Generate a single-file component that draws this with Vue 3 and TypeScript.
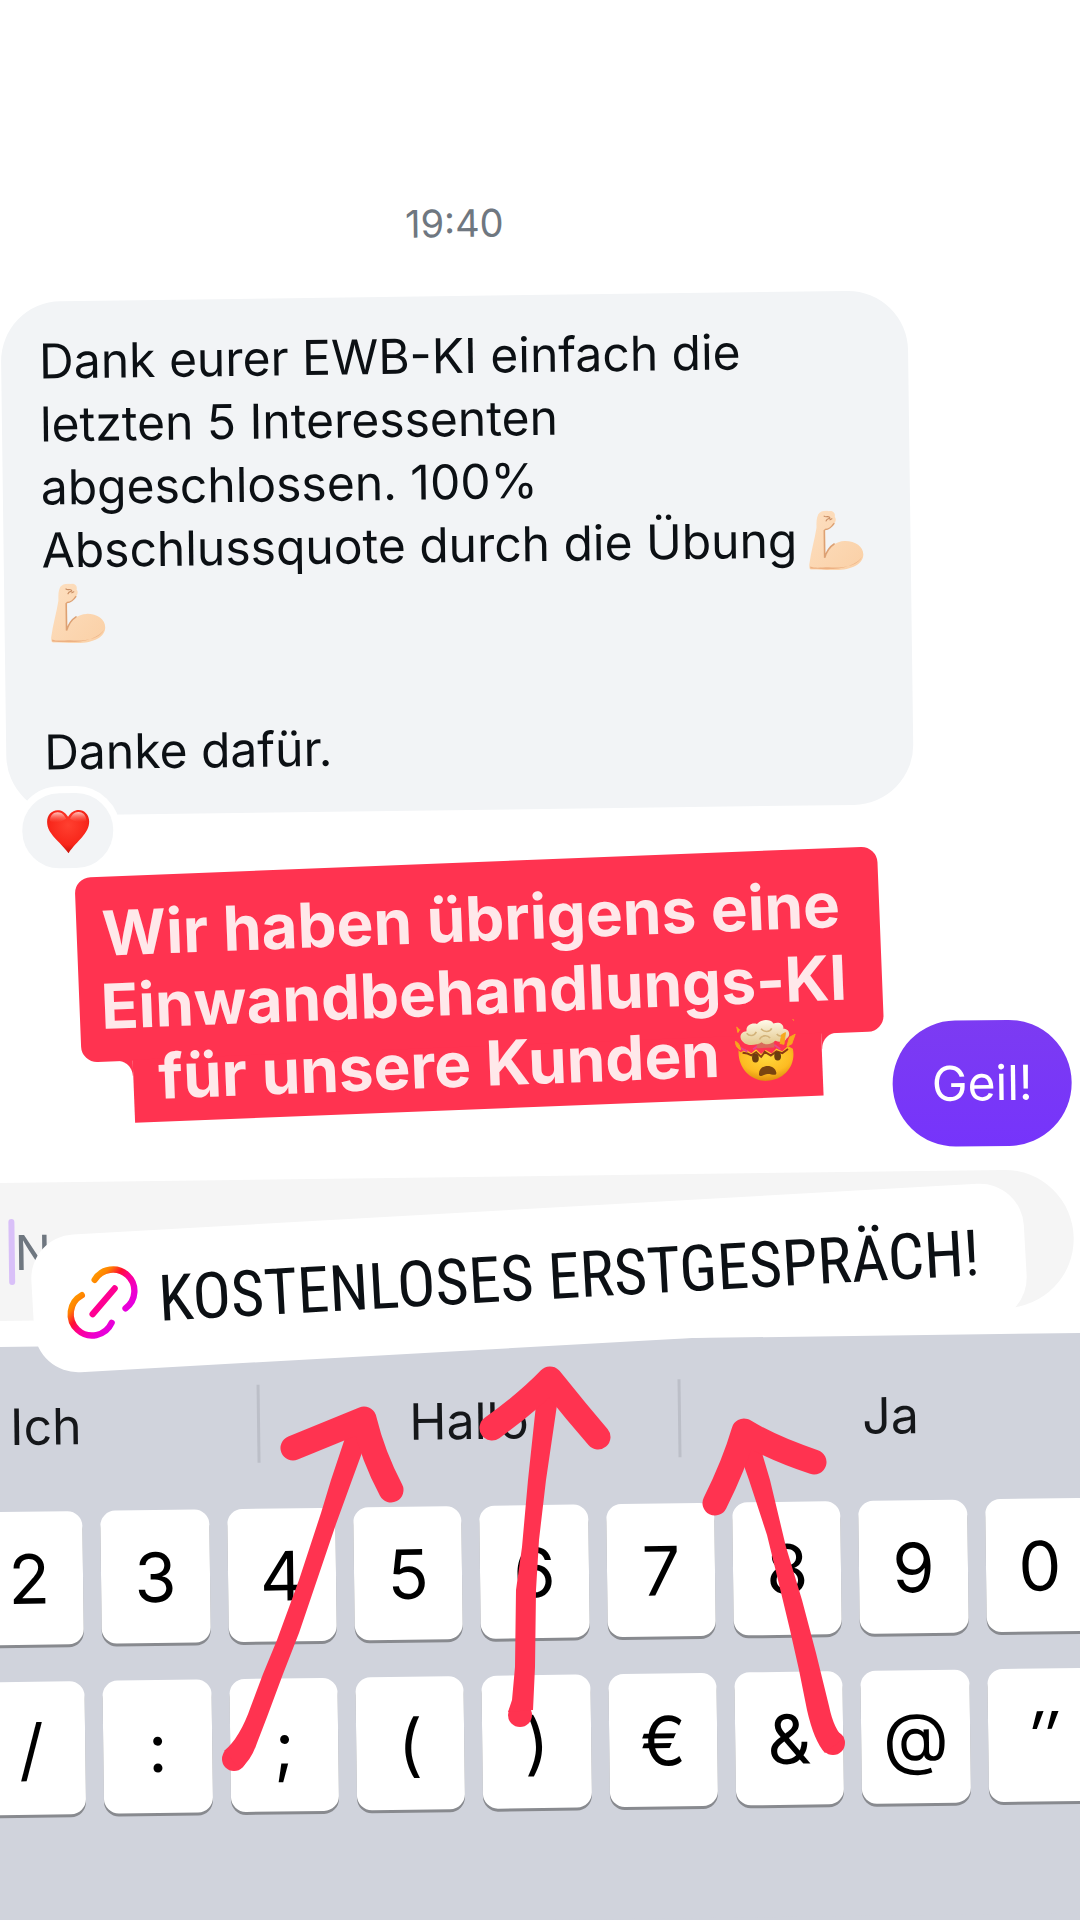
<script setup lang="ts">
const suggestions: string[] = ['Ich', 'Hallo', 'Ja']
const keyRows: string[][] = [
  ['2', '3', '4', '5', '6', '7', '8', '9', '0'],
  ['/', ':', ';', '(', ')', '€', '&', '@', '″'],
]
</script>

<template>
  <main class="story">
    <svg class="defs" width="0" height="0" aria-hidden="true">
      <defs>
        <linearGradient id="skin" x1="0" y1="0" x2="1" y2="1">
          <stop offset="0" stop-color="#fddfc0" />
          <stop offset="1" stop-color="#fad0a6" />
        </linearGradient>
        <symbol id="biceps" viewBox="0 0 56 62">
          <path d="M10 4C12 1 17 0 21 1C25 0 28 3 27 7C29 9 28 13 25 15C23 18 20 20 17 20V48C20 38 28 32 37 32C48 32 56 38 56 46C56 56 44 62 27 62C17 62 8 61 2 61C0 61 0 59 0 56C2 42 6 30 8 18C8 12 8 8 10 4Z" fill="url(#skin)" />
          <path d="M1 60C14 61 44 64 55 48C50 59 34 60 20 59C12 59 6 60 1 58Z" fill="#edb183" />
          <path d="M17 20C20 20 24 17 26 14M16 21V49C18 43 21 38 26 35" fill="none" stroke="#dda173" stroke-width="1.6" stroke-linecap="round" />
          <path d="M16 6C18 8 21 5 22 8C22 9 19 8 18 11M22 10L24 9" fill="none" stroke="#c98d63" stroke-width="1.2" stroke-linecap="round" />
        </symbol>
      </defs>
    </svg>

    <section class="phone">
      <time class="stamp">19:40</time>

      <article class="bubble incoming">
        <p>
          Dank eurer EWB-KI einfach die<br />letzten 5 Interessenten<br />abgeschlossen. 100%<br />Abschlussquote durch die Übung<svg class="arm" role="img" aria-label="💪🏻"><use href="#biceps" /></svg><br /><svg class="arm lead" role="img" aria-label="💪🏻"><use href="#biceps" /></svg>
        </p>
        <p>Danke dafür.</p>
        <span class="reaction">
          <svg viewBox="0 0 44 46" role="img" aria-label="❤️">
            <defs>
              <radialGradient id="heart" cx="0.5" cy="0.35" r="0.7">
                <stop offset="0" stop-color="#ff4030" />
                <stop offset="0.65" stop-color="#f8261a" />
                <stop offset="1" stop-color="#b80d05" />
              </radialGradient>
              <linearGradient id="gloss" x1="0" y1="0" x2="0" y2="1">
                <stop offset="0" stop-color="#ffc9c2" />
                <stop offset="1" stop-color="#ff6a5c" stop-opacity="0" />
              </linearGradient>
            </defs>
            <path d="M22 8C19 3 15 1 11 1C5 1 0 6 0 13C0 26 13 33 22 46C31 33 44 26 44 13C44 6 39 1 33 1C29 1 25 3 22 8Z" fill="url(#heart)" />
            <path d="M3 12C3 6 7 3 11 3C16 3 18 6 20 10C14 14 8 15 3 12ZM41 12C41 6 37 3 33 3C28 3 26 6 24 10C30 14 36 15 41 12Z" fill="url(#gloss)" />
          </svg>
        </span>
      </article>

      <article class="bubble outgoing"><p>Geil!</p></article>

      <form class="composer" @submit.prevent>
        <span class="caret"></span>
        <input type="text" placeholder="Nachricht schreiben …" aria-label="Nachricht schreiben" />
      </form>

      <section class="keyboard">
        <div class="suggestions">
          <button v-for="word in suggestions" :key="word" type="button">{{ word }}</button>
        </div>
        <div v-for="(row, i) in keyRows" :key="i" class="row">
          <button v-for="key in row" :key="key" type="button" :class="{ slanted: key === '″' }">{{ key }}</button>
        </div>
      </section>
    </section>

    <div class="caption">
      <p class="wide">Wir haben übrigens eine<br />Einwandbehandlungs-KI</p>
      <p class="narrow">
        <span>für unsere Kunden</span>
        <svg class="mind" viewBox="0 0 62 64" role="img" aria-label="🤯">
          <defs>
            <radialGradient id="face" cx="0.5" cy="0.3" r="0.75">
              <stop offset="0" stop-color="#ffd93c" />
              <stop offset="0.6" stop-color="#fdbc22" />
              <stop offset="1" stop-color="#d98308" />
            </radialGradient>
            <linearGradient id="cloud" x1="0" y1="0" x2="0" y2="1">
              <stop offset="0" stop-color="#fffbea" />
              <stop offset="1" stop-color="#e3c78c" />
            </linearGradient>
          </defs>
          <path d="M3 30C6 36 8 27 12 31L16 34L21 30L26 35L31 31L37 35L42 30L48 33L54 28L59 31C62 48 49 63 31 63C14 63 1 48 3 30Z" fill="url(#face)" />
          <path d="M7 33L12 34L16 36L21 33L26 38L30 33L36 37L42 33L48 35L54 31" fill="none" stroke="#8a3a12" stroke-width="2" />
          <path d="M5 28L12 32M18 30L24 26M40 26L46 31" fill="none" stroke="#e8458a" stroke-width="2" />
          <rect x="22" y="20" width="18" height="9" fill="#d96a5a" />
          <path d="M8 22C3 17 6 11 12 11C11 5 18 2 23 4C27-1 37-1 40 4C46 2 51 5 50 10C56 10 58 17 53 20C50 25 44 23 41 22C37 26 30 26 27 23C22 26 12 27 8 22Z" fill="url(#cloud)" />
          <path d="M12 13C15 17 20 16 22 12M27 9C30 13 36 13 38 9M25 20C27 16 33 15 36 19M43 15C45 18 49 18 51 15" fill="none" stroke="#d3b37a" stroke-width="1.6" />
          <path d="M2 6L3 12L5 9M0 21C3 22 5 26 5 30C1 28 0 24 0 21ZM48 16L52 14L50 26L46 25ZM56 19L62 16L58 26L53 28ZM60 0L61 2" fill="#f7a81d" stroke="#f7a81d" stroke-width="1" />
          <ellipse cx="20" cy="39" rx="3.5" ry="4.5" fill="#6b3d0e" />
          <ellipse cx="43" cy="38" rx="3.5" ry="4.5" fill="#6b3d0e" />
          <path d="M23 56C23 45 40 45 41 55C41 59 36 56 32 56C28 56 24 60 23 56Z" fill="#7a4410" />
        </svg>
      </p>
    </div>

    <a class="link" href="#erstgespraech">
      <svg viewBox="0 0 80 80" aria-hidden="true">
        <defs>
          <linearGradient id="brand" x1="0" y1="0" x2="1" y2="1">
            <stop offset="0" stop-color="#ffa000" />
            <stop offset="0.18" stop-color="#ff8400" />
            <stop offset="0.36" stop-color="#ff1030" />
            <stop offset="0.52" stop-color="#ff0090" />
            <stop offset="0.76" stop-color="#ee00cc" />
            <stop offset="1" stop-color="#e000e8" />
          </linearGradient>
        </defs>
        <g fill="none" stroke-width="6.5" stroke-linecap="round">
          <path d="M32 17A22 22 0 1 1 62 48" stroke="url(#brand)" />
          <path d="M18 32A22 22 0 1 0 47 62" stroke="url(#brand)" />
          <path d="M52 27L28 52" stroke="#ff0092" />
        </g>
      </svg>
      <span>KOSTENLOSES ERSTGESPRÄCH!</span>
    </a>

    <svg class="arrows" viewBox="0 0 1080 1920" aria-hidden="true">
      <g fill="#ff3350">
        <circle cx="234" cy="1759" r="12" />
        <path d="M224 1751Q240 1738 251 1706L263 1674L277 1640L299 1580L321 1513L331 1480L345 1438L356 1411L374 1421L363 1450L352 1480L336 1524L317 1580L299 1633L283 1674L267 1717L257 1743Q251 1761 240 1769Z" />
        <circle cx="520" cy="1715" r="12" />
        <path d="M508 1712L512 1700L515 1667L516 1590L522 1547L528 1480L536 1405L540 1378H562L557 1405L546 1480L539 1540L536 1590L535 1667L533 1710Z" />
        <circle cx="833" cy="1743" r="12" />
        <path d="M734 1430L743 1463L749 1480L767 1535L778 1580L790 1630L799 1670L807 1710Q814 1741 825 1753L844 1738Q834 1730 829 1706L816 1653L802 1600L786 1547L770 1480L762 1453L754 1426Z" />
      </g>
      <g fill="none" stroke="#ff3350" stroke-width="25" stroke-linecap="round" stroke-linejoin="round">
        <path d="M293 1448L364 1419Q373 1456 391 1490" />
        <path d="M492 1428Q528 1402 550 1379L576 1411L598 1437" />
        <path d="M715 1503Q734 1465 744 1431Q772 1448 814 1462" />
      </g>
    </svg>
  </main>
</template>

<style>
body {
  margin: 0;
  background: #fff;
}
</style>

<style scoped>
.story {
  position: relative;
  min-height: 100vh;
  overflow: hidden;
  background: #fff;
  font-family: Inter, 'Liberation Sans', sans-serif;
  color: #0c1014;
}

.story p {
  margin: 0;
}

.defs {
  position: absolute;
}

button {
  border: 0;
  padding: 0;
  background: none;
  font: inherit;
  color: inherit;
}

.phone {
  display: flex;
  flex-direction: column;
  min-height: 100vh;
  margin: 0 -20px 0 -172px;
  transform: rotate(-0.75deg);
  transform-origin: 56% 50%;
}

.stamp {
  padding: 202px 0 53px;
  font-size: 38px;
  line-height: 40px;
  text-align: center;
  color: #6f7780;
}

.bubble {
  font-size: 48px;
  line-height: 63px;
  white-space: nowrap;
}

.incoming {
  position: relative;
  margin: 0 184px 0 181px;
  padding: 28px 38px 32px;
  border-radius: 60px;
  background: #f2f4f6;
}

.incoming p + p {
  margin-top: 76px;
}

.arm {
  width: 57px;
  height: 60px;
  margin-left: 10px;
  vertical-align: -13px;
}

.arm.lead {
  margin-left: 7px;
}

.reaction {
  position: absolute;
  left: 8px;
  bottom: -60px;
  display: flex;
  align-items: center;
  justify-content: center;
  width: 91px;
  height: 75px;
  border: 7px solid #fff;
  border-radius: 46px;
  background: #f2f4f6;
}

.reaction svg {
  width: 44px;
  height: 44px;
}

.outgoing {
  align-self: flex-end;
  margin: 217px 30px 0 0;
  padding: 31px 39px 32px;
  border-radius: 63px;
  background: linear-gradient(#7c3bf2, #7634fb);
  color: #fff;
}

.composer {
  display: flex;
  align-items: center;
  height: 138px;
  margin: 24px 30px 26px 40px;
  padding-left: 137px;
  border-radius: 69px;
  background: #f5f5f5;
}

.caret {
  width: 6px;
  height: 66px;
  border-radius: 3px;
  background: #d9c0f8;
}

.composer input {
  flex: 1;
  min-width: 0;
  border: 0;
  padding: 0;
  background: none;
  outline: none;
  font: inherit;
  font-size: 48px;
}

.composer input::placeholder {
  color: #6f7780;
  opacity: 1;
}

.keyboard {
  flex: 1;
  background: #d0d3dc;
  box-shadow: 0 40px 0 #d0d3dc;
}

.suggestions {
  display: grid;
  grid-template-columns: repeat(3, 1fr);
  padding: 41px 6px 46px 1px;
  font-size: 50px;
  color: #15171a;
}

.suggestions button {
  height: 78px;
}

.suggestions button + button {
  border-left: 3px solid #bcbfc8;
}

.row {
  display: grid;
  grid-template-columns: repeat(9, 1fr);
  gap: 18px;
  padding: 0 14px 37px 139px;
}

.row button {
  height: 133px;
  border-radius: 15px;
  background: #fff;
  box-shadow: 0 3px 0 #888a8f;
  font-size: 68px;
  color: #000;
}

.row .slanted {
  font-style: italic;
}

.caption {
  position: absolute;
  top: 862px;
  left: 79px;
  width: 803px;
  transform: rotate(-2.25deg);
  font-size: 62px;
  font-weight: 700;
  line-height: 73px;
  text-align: center;
  white-space: nowrap;
  color: #ffe8ea;
}

.caption .wide {
  padding: 20px 14px 19px 0;
  border-radius: 16px;
  background: #ff3350;
}

.caption .narrow {
  position: relative;
  display: flex;
  align-items: center;
  justify-content: center;
  gap: 15px;
  height: 63px;
  margin: -1px 63px 0 51px;
  background: #ff3350;
}

.narrow span {
  margin-top: -28px;
}

.narrow::before,
.narrow::after {
  content: '';
  position: absolute;
  top: 0;
  width: 16px;
  height: 16px;
}

.narrow::before {
  right: 100%;
  background: radial-gradient(circle at 0 100%, transparent 15px, #ff3350 16px);
}

.narrow::after {
  left: 100%;
  background: radial-gradient(circle at 100% 100%, transparent 15px, #ff3350 16px);
}

.mind {
  width: 62px;
  height: 62px;
  margin-top: -32px;
}

.link {
  position: absolute;
  top: 1209px;
  left: 32px;
  display: flex;
  align-items: center;
  gap: 16px;
  box-sizing: border-box;
  width: 994px;
  height: 138px;
  padding-left: 32px;
  border-radius: 44px;
  background: #fff;
  transform: rotate(-3.2deg);
  font-family: 'Roboto Condensed', 'Liberation Sans Narrow', Roboto, sans-serif;
  font-size: 64px;
  color: #0c1014;
  text-decoration: none;
  white-space: nowrap;
}

.link svg {
  width: 78px;
  height: 78px;
}

.arrows {
  position: absolute;
  top: 0;
  left: 0;
  width: 100%;
  pointer-events: none;
}
</style>
